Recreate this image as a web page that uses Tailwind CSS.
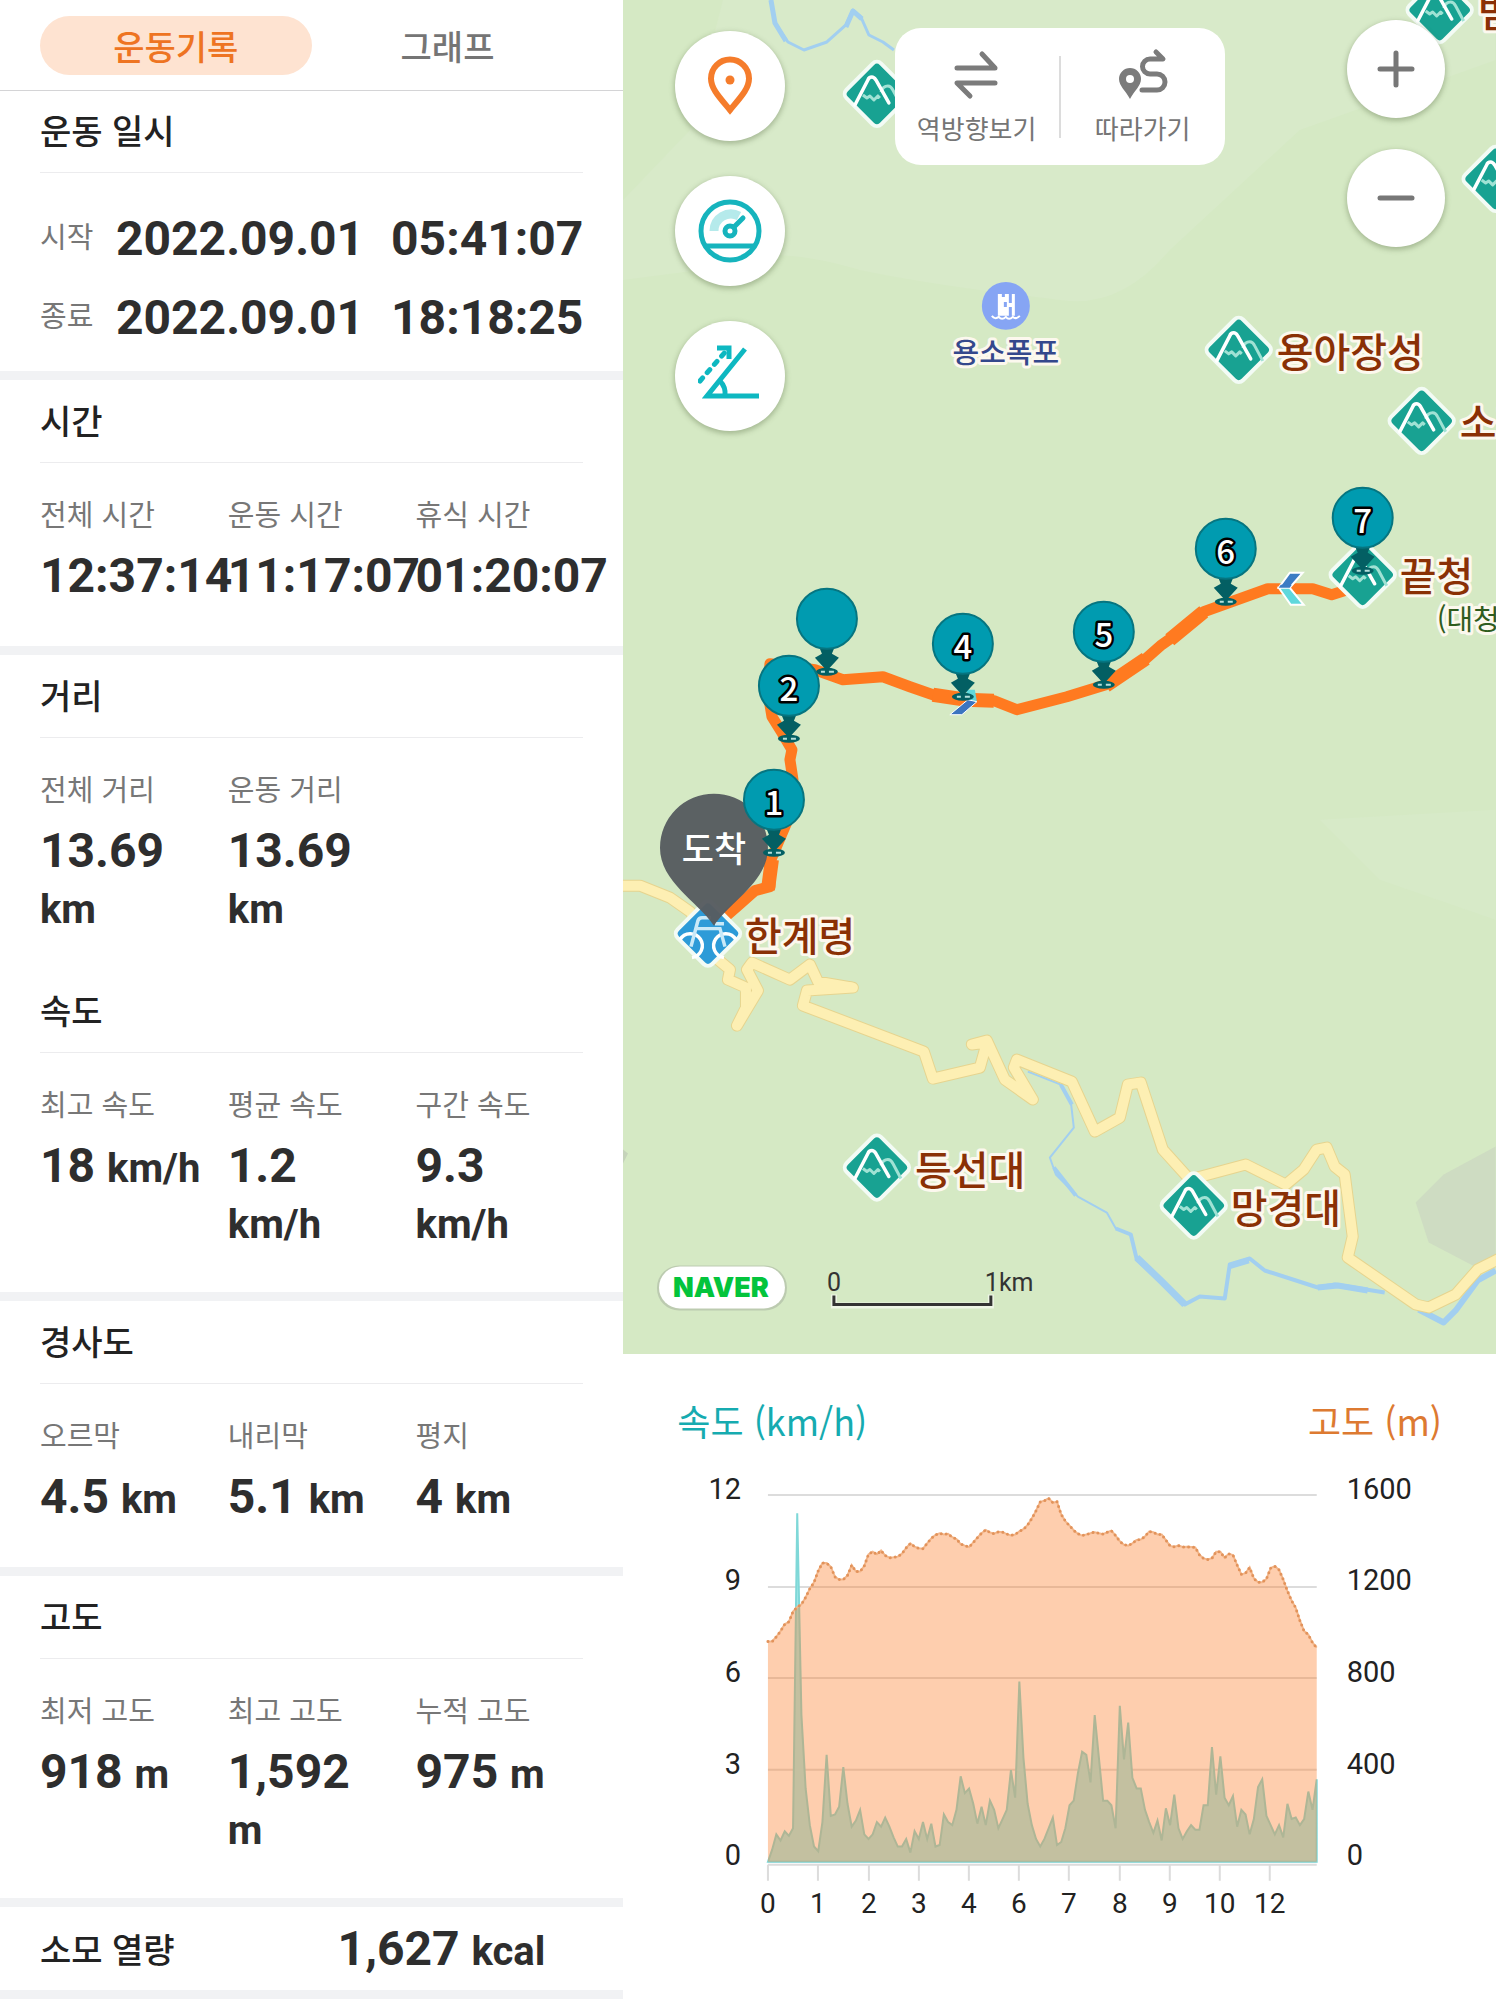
<!DOCTYPE html>
<html lang="ko">
<head>
  <meta charset="UTF-8" />
  <meta name="viewport" content="width=device-width, initial-scale=1.0"/>
  <title>운동기록</title>
  <script src="https://cdn.jsdelivr.net/npm/@tailwindcss/browser@4"></script>
</head>
<body class="bg-white font-['Noto_Sans_CJK_KR',sans-serif] text-[#222]">
  <div class="flex items-start">

    <!-- record panel -->
    <main class="w-5/12 min-w-0">
      <nav class="flex px-10 pt-4 pb-[15px] border-b border-[#d4d4d6] text-[34px] leading-[59px] font-medium">
        <button class="flex-1 rounded-full bg-[#fee3d1] text-[#ee7422]">운동기록</button>
        <button class="flex-1 rounded-full text-[#757575]">그래프</button>
      </nav>

      <section>
        <h2 class="mx-10 pt-[13px] pb-4 text-[34px] leading-[52px] font-medium border-b border-[#ececee]">운동 일시</h2>
        <dl class="px-10 pt-[26px] pb-[14px]">
          <div class="flex items-center h-[79px]">
            <dt class="w-[76px] pb-2 text-[29px] leading-10 text-[#777]">시작</dt>
            <dd class="flex flex-1 justify-between font-[Roboto,sans-serif] font-bold text-[48px] leading-14 text-[#2e2e2e]"><span>2022.09.01</span><span>05:41:07</span></dd>
          </div>
          <div class="flex items-center h-[79px]">
            <dt class="w-[76px] pb-2 text-[29px] leading-10 text-[#777]">종료</dt>
            <dd class="flex flex-1 justify-between font-[Roboto,sans-serif] font-bold text-[48px] leading-14 text-[#2e2e2e]"><span>2022.09.01</span><span>18:18:25</span></dd>
          </div>
        </dl>
      </section>

      <section class="border-t-9 border-[#f1f2f4]">
        <h2 class="mx-10 pt-[14px] pb-4 text-[34px] leading-[52px] font-medium border-b border-[#ececee]">시간</h2>
        <dl class="grid grid-cols-3 pl-10 pr-5 pt-[30px] pb-[42px]">
          <div>
            <dt class="text-[29px] leading-10 text-[#777]">전체 시간</dt>
            <dd class="mt-[15px] whitespace-nowrap font-[Roboto,sans-serif] font-bold text-[48px] leading-14 text-[#2e2e2e]">12:37:14</dd>
          </div>
          <div>
            <dt class="text-[29px] leading-10 text-[#777]">운동 시간</dt>
            <dd class="mt-[15px] whitespace-nowrap font-[Roboto,sans-serif] font-bold text-[48px] leading-14 text-[#2e2e2e]">11:17:07</dd>
          </div>
          <div>
            <dt class="text-[29px] leading-10 text-[#777]">휴식 시간</dt>
            <dd class="mt-[15px] whitespace-nowrap font-[Roboto,sans-serif] font-bold text-[48px] leading-14 text-[#2e2e2e]">01:20:07</dd>
          </div>
        </dl>
      </section>

      <section class="border-t-9 border-[#f1f2f4]">
        <h2 class="mx-10 pt-[14px] pb-4 text-[34px] leading-[52px] font-medium border-b border-[#ececee]">거리</h2>
        <dl class="grid grid-cols-3 pl-10 pr-5 pt-[30px] pb-[35px]">
          <div>
            <dt class="text-[29px] leading-10 text-[#777]">전체 거리</dt>
            <dd class="mt-[15px] font-[Roboto,sans-serif] font-bold text-[48px] leading-14 text-[#2e2e2e]">13.69<br><span class="text-[40px] leading-none">km</span></dd>
          </div>
          <div>
            <dt class="text-[29px] leading-10 text-[#777]">운동 거리</dt>
            <dd class="mt-[15px] font-[Roboto,sans-serif] font-bold text-[48px] leading-14 text-[#2e2e2e]">13.69<br><span class="text-[40px] leading-none">km</span></dd>
          </div>
        </dl>
      </section>

      <section>
        <h2 class="mx-10 pt-[14px] pb-4 text-[34px] leading-[52px] font-medium border-b border-[#ececee]">속도</h2>
        <dl class="grid grid-cols-3 pl-10 pr-5 pt-[30px] pb-[42px]">
          <div>
            <dt class="text-[29px] leading-10 text-[#777]">최고 속도</dt>
            <dd class="mt-[15px] whitespace-nowrap font-[Roboto,sans-serif] font-bold text-[48px] leading-14 text-[#2e2e2e]">18 <span class="text-[40px] leading-none">km/h</span></dd>
          </div>
          <div>
            <dt class="text-[29px] leading-10 text-[#777]">평균 속도</dt>
            <dd class="mt-[15px] font-[Roboto,sans-serif] font-bold text-[48px] leading-14 text-[#2e2e2e]">1.2<br><span class="text-[40px] leading-none">km/h</span></dd>
          </div>
          <div>
            <dt class="text-[29px] leading-10 text-[#777]">구간 속도</dt>
            <dd class="mt-[15px] font-[Roboto,sans-serif] font-bold text-[48px] leading-14 text-[#2e2e2e]">9.3<br><span class="text-[40px] leading-none">km/h</span></dd>
          </div>
        </dl>
      </section>

      <section class="border-t-9 border-[#f1f2f4]">
        <h2 class="mx-10 pt-[14px] pb-4 text-[34px] leading-[52px] font-medium border-b border-[#ececee]">경사도</h2>
        <dl class="grid grid-cols-3 pl-10 pr-5 pt-[30px] pb-[42px]">
          <div>
            <dt class="text-[29px] leading-10 text-[#777]">오르막</dt>
            <dd class="mt-[15px] whitespace-nowrap font-[Roboto,sans-serif] font-bold text-[48px] leading-14 text-[#2e2e2e]">4.5 <span class="text-[40px] leading-none">km</span></dd>
          </div>
          <div>
            <dt class="text-[29px] leading-10 text-[#777]">내리막</dt>
            <dd class="mt-[15px] whitespace-nowrap font-[Roboto,sans-serif] font-bold text-[48px] leading-14 text-[#2e2e2e]">5.1 <span class="text-[40px] leading-none">km</span></dd>
          </div>
          <div>
            <dt class="text-[29px] leading-10 text-[#777]">평지</dt>
            <dd class="mt-[15px] whitespace-nowrap font-[Roboto,sans-serif] font-bold text-[48px] leading-14 text-[#2e2e2e]">4 <span class="text-[40px] leading-none">km</span></dd>
          </div>
        </dl>
      </section>

      <section class="border-t-9 border-[#f1f2f4]">
        <h2 class="mx-10 pt-[14px] pb-4 text-[34px] leading-[52px] font-medium border-b border-[#ececee]">고도</h2>
        <dl class="grid grid-cols-3 pl-10 pr-5 pt-[30px] pb-[42px]">
          <div>
            <dt class="text-[29px] leading-10 text-[#777]">최저 고도</dt>
            <dd class="mt-[15px] whitespace-nowrap font-[Roboto,sans-serif] font-bold text-[48px] leading-14 text-[#2e2e2e]">918 <span class="text-[40px] leading-none">m</span></dd>
          </div>
          <div>
            <dt class="text-[29px] leading-10 text-[#777]">최고 고도</dt>
            <dd class="mt-[15px] font-[Roboto,sans-serif] font-bold text-[48px] leading-14 text-[#2e2e2e]">1,592<br><span class="text-[40px] leading-none">m</span></dd>
          </div>
          <div>
            <dt class="text-[29px] leading-10 text-[#777]">누적 고도</dt>
            <dd class="mt-[15px] whitespace-nowrap font-[Roboto,sans-serif] font-bold text-[48px] leading-14 text-[#2e2e2e]">975 <span class="text-[40px] leading-none">m</span></dd>
          </div>
        </dl>
      </section>

      <section class="border-y-9 border-[#f1f2f4]">
        <div class="flex items-center justify-between pl-10 pr-[78px] h-[83px]">
          <h2 class="text-[34px] leading-[52px] font-medium">소모 열량</h2>
          <p class="font-[Roboto,sans-serif] font-bold text-[48px] leading-14 text-[#2e2e2e]">1,627 <span class="text-[40px] leading-none">kcal</span></p>
        </div>
      </section>
    </main>

    <div class="w-7/12 min-w-0">
      <!-- map -->
      <section class="relative overflow-hidden bg-[#d5e9c4]">
        <svg class="block w-full" viewBox="623 0 873 1355" font-family="'Noto Sans CJK KR', sans-serif">
          <defs>
            <g id="peak">
              <rect x="-24.500" y="-24.500" width="49" height="49" rx="6" transform="rotate(45)" fill="#18a292" stroke="#f3fbf5" stroke-width="4"/>
              <path d="M4-2q2-6 7-6 3 0 5 4l8 15M-14 1l4 3 3-2 4 4 4-4 2 2" fill="none" stroke="#a0e2d4" stroke-width="3" stroke-linejoin="round"/>
              <path d="M-22 11L-9-14q1-3 4-3 2 0 4 3L12 9" fill="none" stroke="#fff" stroke-width="3.500" stroke-linecap="round" stroke-linejoin="round"/>
            </g>
            <g id="stop">
              <ellipse cy="53" rx="11" ry="4" fill="#035f63"/>
              <path d="M-6 53h4M2 53h5" stroke="#b5e0dc" stroke-width="2"/>
              <path d="M-7 30h14l-2 5 7 4L1 51h-2l-11-12 7-4z" fill="#035f63"/>
              <circle r="30" fill="#009bb0" stroke="#067580" stroke-width="2"/>
            </g>
          </defs>

          <!-- terrain -->
          <path d="M623 0h873v60L1300 130 1170 250Q1120 310 1060 300 930 285 860 270 760 240 700 270L623 280z" fill="#d8eac9"/>
          <path d="M623 0h100L690 130 623 200z" fill="#d5e9c4"/>
          <path d="M1496 810l-176 10 60 60 116 40z" fill="#d7eac8"/>
          <path d="M1496 1147L1444 1175 1416 1203 1429 1243 1475 1267 1496 1262z" fill="#cedcc2"/>
          <path d="M623 1150l5 4-5 10z" fill="#c5d3ba"/>

          <!-- water -->
          <g fill="none" stroke="#a2cff0" stroke-linejoin="round">
            <path d="M771 0L775 23 788 42 804 50 827 42 846 25 853 10 861 17 869 35 883 42 894 50" stroke-width="3"/>
            <path d="M771 0l4 23 11 18M846 27l7-16 9 8" stroke-width="5"/>
            <path d="M1028 1072L1061 1085 1071 1102 1074 1128 1050 1158 1056 1175 1078 1197 1107 1213 1116 1229 1131 1235" stroke-width="2"/>
            <path d="M1061 1085l11 20M1054 1168l22 28M1116 1229L1131 1235 1137 1260 1162 1282 1185 1305 1200 1297 1225 1299 1230 1265 1250 1259 1265 1271 1318 1288 1335 1285 1385 1293" stroke-width="4"/>
            <path d="M1137 1258L1162 1282 1185 1305" stroke-width="7"/>
            <path d="M1229 1267l20-6M1318 1288l20-2 30 5" stroke-width="6"/>
            <path d="M1419 1310L1444 1323 1456 1311 1478 1281 1496 1271" stroke-width="6"/>
          </g>

          <!-- roads -->
          <g fill="none" stroke-linecap="round" stroke-linejoin="round">
            <path d="M615 886L640 886 670 898 690 912 707 934 718 960 730 970 728 980 746 988 746 1008 737 1026 758 991 747 970 752 963 790 980 810 965 818 982 853 988 807 991 803 1006 924 1052 933 1079 980 1068 987 1043 972 1045 987 1041 1005 1080 1033 1100 1014 1068 1017 1060 1072 1082 1095 1132 1120 1118 1128 1085 1141 1083 1163 1150 1190 1180 1246 1165 1286 1185 1304 1170 1317 1150 1327 1148 1335 1167 1345 1175 1353 1237 1348 1258 1416 1305 1429 1308 1456 1295 1478 1270 1500 1259" stroke="#e6d48f" stroke-width="12"/>
            <path d="M615 886L640 886 670 898 690 912 707 934 718 960 730 970 728 980 746 988 746 1008 737 1026 758 991 747 970 752 963 790 980 810 965 818 982 853 988 807 991 803 1006 924 1052 933 1079 980 1068 987 1043 972 1045 987 1041 1005 1080 1033 1100 1014 1068 1017 1060 1072 1082 1095 1132 1120 1118 1128 1085 1141 1083 1163 1150 1190 1180 1246 1165 1286 1185 1304 1170 1317 1150 1327 1148 1335 1167 1345 1175 1353 1237 1348 1258 1416 1305 1429 1308 1456 1295 1478 1270 1500 1259" stroke="#fdefb3" stroke-width="10"/>
          </g>

          <!-- track -->
          <path d="M722 920L737 907 755 891 770 887 771 860 788 820 793 780 790 760 792 750 782 733 772 717 768 693 770 664 815 670 843 680 883 677 910 687 933 695 966 699 994 701 1017 710 1067 697 1106 685 1145 660 1162 645 1179 633 1204 612 1229 603 1268 589 1313 589 1332 595 1357 587" fill="none" stroke="#ff7a20" stroke-width="11" stroke-linejoin="round"/>
          <path d="M768 890l4-30M933 695l33 5 28 1M1106 686l40-27M1170 640l34-28" fill="none" stroke="#ff7a20" stroke-width="14"/>
          <path d="M1303 573h-13l-11 15h11z" fill="#3b7cc4" stroke="#fff" stroke-width="2"/>
          <path d="M1279 588l12 17h13l-14-17z" fill="#5fd8dc" stroke="#fff" stroke-width="2"/>
          <path d="M1290 588h-11l2-3h11z" fill="#3b7cc4"/>
          <path d="M966 690h9l2 12-8 2z" fill="#5fd8dc"/>
          <path d="M950 715h12l15-13-9-2z" fill="#3b74c0" stroke="#fff" stroke-width="1"/>

          <!-- places -->
          <use href="#peak" x="877" y="94"/>
          <use href="#peak" x="1440" y="10"/>
          <use href="#peak" x="1496" y="179"/>
          <use href="#peak" x="1239" y="350"/>
          <use href="#peak" x="1422" y="421"/>
          <use href="#peak" x="1363" y="575"/>
          <use href="#peak" x="877" y="1168"/>
          <use href="#peak" x="1194" y="1206"/>
          <g transform="translate(708 934)">
            <rect x="-24.500" y="-24.500" width="49" height="49" rx="6" transform="rotate(45)" fill="#2d9bd8" stroke="#f3fbf5" stroke-width="4"/>
            <g fill="none" stroke="#c9e9f8" stroke-width="3.500">
              <path d="M-28 6a12 12 0 1 1 12 18M28 6a12 12 0 1 0-12 18" stroke="#fff"/>
              <path d="M-17 13l7-26q1-3 4-3h9M-13-5h25l5 18M7-10h9"/>
            </g>
          </g>
          <g transform="translate(1006 306)">
            <circle r="24" fill="#86a5f4"/>
            <path d="M-8-12h4v3h3v-3h4v9h3v-9h3v22h-3V1H3v9H-2v-9h3v-5h-3V10h-6z" fill="#fff"/>
            <path d="M-14 10q3 4 7 1 3 4 7 0 3 4 7 0 3 3 7-1" fill="none" stroke="#fff" stroke-width="2"/>
          </g>
          <g font-size="40" font-weight="500" fill="#8a3005" stroke="#fcf8ee" stroke-width="6" stroke-linejoin="round" paint-order="stroke">
            <text x="1478" y="27">범봉</text>
            <text x="1277" y="367">용아장성</text>
            <text x="1460" y="437">소청</text>
            <text x="1400" y="591">끝청</text>
            <text x="745" y="951">한계령</text>
            <text x="915" y="1185">등선대</text>
            <text x="1231" y="1223">망경대</text>
            <text x="1006" y="363" font-size="29" text-anchor="middle" fill="#34488c">용소폭포</text>
            <text x="1437" y="630" font-size="29" fill="#2f5c1d" font-weight="400">(대청봉)</text>
          </g>

          <!-- finish pin -->
          <path d="M714 926C698 902 660 882 660 848a54 54 0 0 1 108 0C768 882 730 902 714 926z" fill="#575c60" fill-opacity=".97"/>
          <text x="714" y="862" font-size="35" font-weight="500" text-anchor="middle" fill="#fff">도착</text>

          <!-- km markers -->
          <use href="#stop" x="827" y="619"/>
          <use href="#stop" x="789" y="686"/>
          <use href="#stop" x="774" y="800"/>
          <use href="#stop" x="963" y="644"/>
          <use href="#stop" x="1104" y="632"/>
          <use href="#stop" x="1226" y="549"/>
          <use href="#stop" x="1363" y="518"/>
          <g font-size="33" font-weight="500" text-anchor="middle" fill="#fff" stroke="#000" stroke-width="5" stroke-linejoin="round" paint-order="stroke">
            <text x="789" y="701">2</text>
            <text x="774" y="815">1</text>
            <text x="963" y="659">4</text>
            <text x="1104" y="647">5</text>
            <text x="1226" y="564">6</text>
            <text x="1363" y="533">7</text>
          </g>

          <!-- logo and scale -->
          <rect x="657" y="1266" width="130" height="45" rx="22" fill="#bccbb0"/>
          <rect x="659" y="1267" width="126" height="42" rx="21" fill="#fff"/>
          <text x="721" y="1298" font-family="Inter, sans-serif" font-weight="900" font-size="27" text-anchor="middle" fill="#03c43c">NAVER</text>
          <path d="M834 1295v11h157v-11" fill="none" stroke="#eef6e6" stroke-width="6"/>
          <path d="M834 1296v9h157v-9" fill="none" stroke="#333" stroke-width="3"/>
          <g font-family="Roboto, sans-serif" font-size="25" fill="#333">
            <text x="827" y="1292">0</text>
            <text x="985" y="1292">1km</text>
          </g>
        </svg>

        <div class="absolute left-[52px] top-[31px] flex flex-col gap-[35px]">
          <button aria-label="위치" class="flex items-center justify-center size-[110px] rounded-full bg-white shadow-[0_2px_5px_1px_rgba(80,100,60,0.35)]">
            <svg class="size-16" viewBox="0 0 64 64" fill="none">
              <path d="M32 56C22 44 13 35 13 24.500a19 19 0 0 1 38 0C51 35 42 44 32 56z" stroke="#f57c2b" stroke-width="6"/>
              <circle cx="32" cy="26" r="4.500" fill="#f57c2b"/>
            </svg>
          </button>
          <button aria-label="속도" class="flex items-center justify-center size-[110px] rounded-full bg-white shadow-[0_2px_5px_1px_rgba(80,100,60,0.35)]">
            <svg class="size-16" viewBox="0 0 64 64" fill="none" stroke="#16b4bd" stroke-width="5">
              <path d="M16 32A17 17 0 0 1 41 17" stroke="#b5eaeb" stroke-width="9"/>
              <circle cx="32" cy="32" r="29"/>
              <path d="M8 47h48"/>
              <circle cx="32" cy="32" r="5"/>
              <path d="M36 28l9-9" stroke-linecap="round"/>
            </svg>
          </button>
          <button aria-label="경사도" class="flex items-center justify-center size-[110px] rounded-full bg-white shadow-[0_2px_5px_1px_rgba(80,100,60,0.35)]">
            <svg class="size-16" viewBox="0 0 64 64" fill="none" stroke="#0eb8c1" stroke-width="5">
              <path d="M47 5L9 52h52"/>
              <path d="M22 37q6 6 5 15"/>
              <path d="M2 37L28 7" stroke-dasharray="4 7" stroke-linecap="round"/>
              <path d="M19 4h12v11"/>
            </svg>
          </button>
        </div>

        <div class="absolute inset-x-0 top-7 flex justify-center pointer-events-none">
          <div class="flex items-center h-[137px] w-[330px] rounded-[26px] bg-white text-[26px] leading-9 text-[#757575] pointer-events-auto">
            <button class="flex-1 flex flex-col items-center gap-[10px]">
              <svg class="w-[50px] h-[52px]" viewBox="0 0 50 52" fill="none" stroke="#7b7b7b" stroke-width="5" stroke-linecap="round" stroke-linejoin="round">
                <path d="M5 20h38L30 6M43 35H5l13 13"/>
              </svg>
              <span>역방향보기</span>
            </button>
            <div class="w-[2px] h-[82px] bg-[#dcdcdc]"></div>
            <button class="flex-1 flex flex-col items-center gap-[10px]">
              <svg class="w-[50px] h-[52px]" viewBox="0 0 50 52" fill="none" stroke="#7b7b7b" stroke-width="5" stroke-linecap="round" stroke-linejoin="round">
                <path d="M38 4l7 7H32a7 7 0 0 0 0 15h7a8 8 0 0 1 0 16H24"/>
                <path d="M12 51C8 43 1 38 1 31a11 11 0 0 1 22 0C23 38 16 43 12 51z" fill="#7b7b7b" stroke="none"/>
                <circle cx="12" cy="31" r="4" fill="#fff" stroke="none"/>
              </svg>
              <span>따라가기</span>
            </button>
          </div>
        </div>

        <div class="absolute right-[51px] top-5 flex flex-col gap-[31px]">
          <button aria-label="확대" class="flex items-center justify-center size-[98px] rounded-full bg-white shadow-[0_2px_5px_1px_rgba(80,100,60,0.35)]">
            <svg class="size-10" viewBox="0 0 40 40" stroke="#777" stroke-width="5" stroke-linecap="round"><path d="M4 20h32M20 4v32"/></svg>
          </button>
          <button aria-label="축소" class="flex items-center justify-center size-[98px] rounded-full bg-white shadow-[0_2px_5px_1px_rgba(80,100,60,0.35)]">
            <svg class="size-10" viewBox="0 0 40 40" stroke="#777" stroke-width="5" stroke-linecap="round"><path d="M4 20h32"/></svg>
          </button>
        </div>
      </section>

      <!-- graph -->
      <section class="pt-[39px]">
        <div class="flex justify-between pl-[54px] pr-[54px] text-[36px] leading-[54px]">
          <h3 class="text-[#16abb0]">속도 (km/h)</h3>
          <h3 class="text-[#dd7a31]">고도 (m)</h3>
        </div>
        <svg class="block w-full" viewBox="0 0 873 552" font-family="Roboto, sans-serif" font-size="28" fill="#222">
          <path d="M145 48h549M145 140h549M145 231h549M145 323h549M145 415h549" stroke="#dcdcdc" stroke-width="2"/>
          <polygon id="speed" fill="#a0e8e8" stroke="#7fd8d8" stroke-width="2"/>
          <polygon id="altitude" fill="#fd7e2a" fill-opacity=".38"/>
          <polyline id="ridge" fill="none" stroke="#f3b78b" stroke-width="2"/>
          <polyline id="dots" fill="none" stroke="#e2935b" stroke-width="3" stroke-linecap="round" stroke-dasharray="0 5"/>
          <path d="M145 418h549M145 418v16M195 418v16M246 418v16M296 418v16M346 418v16M396 418v16M446 418v16M497 418v16M547 418v16M597 418v16M647 418v16" fill="none" stroke="#dcdcdc" stroke-width="2"/>
          <g text-anchor="end" font-size="29">
            <text x="118" y="52">12</text>
            <text x="118" y="143">9</text>
            <text x="118" y="235">6</text>
            <text x="118" y="327">3</text>
            <text x="118" y="418">0</text>
          </g>
          <g font-size="29">
            <text x="724" y="52">1600</text>
            <text x="724" y="143">1200</text>
            <text x="724" y="235">800</text>
            <text x="724" y="327">400</text>
            <text x="724" y="418">0</text>
          </g>
          <g text-anchor="middle">
            <text x="145" y="466">0</text>
            <text x="195" y="466">1</text>
            <text x="246" y="466">2</text>
            <text x="296" y="466">3</text>
            <text x="346" y="466">4</text>
            <text x="396" y="466">6</text>
            <text x="446" y="466">7</text>
            <text x="497" y="466">8</text>
            <text x="547" y="466">9</text>
            <text x="597" y="466">10</text>
            <text x="647" y="466">12</text>
          </g>
        </svg>
      </section>
    </div>
  </div>

  <script>
    const altitude = [961,961,982,1006,1036,1047,1092,1111,1123,1153,1191,1219,1269,1303,1303,1286,1243,1231,1231,1249,1294,1266,1266,1291,1341,1353,1341,1358,1336,1326,1328,1331,1344,1369,1389,1374,1368,1366,1389,1411,1426,1433,1428,1431,1416,1408,1386,1379,1373,1393,1414,1433,1448,1436,1431,1439,1438,1429,1424,1428,1441,1451,1469,1498,1531,1570,1575,1586,1566,1571,1515,1486,1466,1446,1431,1423,1428,1433,1438,1433,1429,1438,1444,1423,1398,1383,1379,1389,1404,1406,1419,1441,1438,1428,1428,1403,1378,1374,1379,1373,1374,1373,1371,1339,1323,1319,1324,1353,1353,1326,1343,1338,1294,1254,1259,1284,1236,1219,1219,1234,1281,1289,1274,1231,1181,1139,1108,1052,1006,991,956,934];
    const speed = [0,.4,.9,.7,1,.85,1.1,11.4,4.8,2.4,1.2,.5,.35,1.3,3.5,1.5,1.55,1.8,3.1,1.9,1.15,1.35,1.7,.9,.75,.9,1.3,1.15,1.45,1.15,.8,.5,.5,.75,.3,1,.75,1.3,.75,1.25,.5,.55,1.55,1.3,1.2,1.7,2.8,2.25,2.4,1.9,1.25,1.8,1.2,2,1.7,1.1,1.4,1.7,3,2.1,5.9,3.4,1.9,1.2,.75,.5,.75,1.1,1.45,.55,.65,1.1,1.85,2,2.9,3.6,3.5,2.6,4.8,3.4,2,2,1.85,1.1,5.1,3.35,4.55,2.75,2.4,2.4,1.7,1.3,.95,1.35,.7,1.75,1.2,2.2,1.1,.75,1,1.2,1.05,1.05,1.85,1.85,3.75,2.2,3.45,2.1,1.85,2.15,1.15,1.7,1.55,.9,1.4,2.45,2.7,1.5,1.2,.9,1.2,.8,1.9,1.4,1.45,1.2,1.4,2.3,1.7,2.7];

    const line = (values, max) => values.map((v, i) =>
      (145 + i * 549 / (values.length - 1)).toFixed(1) + "," + (415 - v / max * 367).toFixed(1)).join(" ");

    document.getElementById("speed").setAttribute("points", line(speed, 12) + " 694,415 145,415");
    document.getElementById("altitude").setAttribute("points", line(altitude, 1600) + " 694,415 145,415");
    document.getElementById("ridge").setAttribute("points", line(altitude, 1600));
    document.getElementById("dots").setAttribute("points", line(altitude, 1600));
  </script>
</body>
</html>
